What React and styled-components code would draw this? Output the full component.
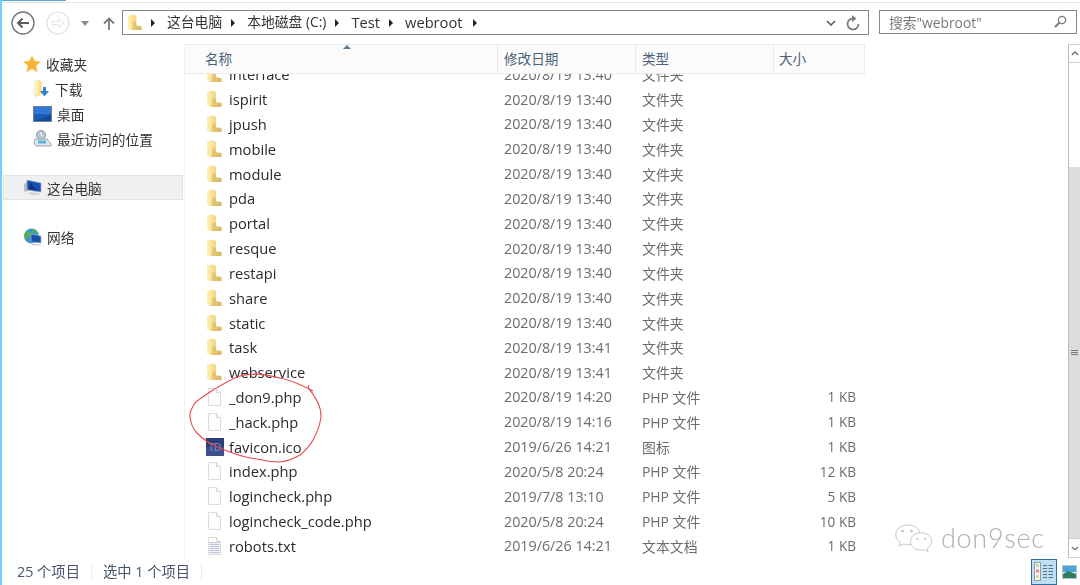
import React, { useId } from 'react';
import styled, { createGlobalStyle } from 'styled-components';

const FONT = `"Open Sans", "Noto Sans CJK SC", sans-serif`;

const Global = createGlobalStyle`
  html, body { margin: 0; padding: 0; height: 100%; background: #fff; overflow: hidden; }
  #root { height: 100%; }
  * { box-sizing: border-box; }
`;

const Window = styled.div`
  position: relative;
  height: 585px;
  width: 1080px;
  display: flex;
  flex-direction: column;
  border-left: 2px solid #6fd2f6;
  font-family: ${FONT};
  font-size: 14px;
  color: #2b2b2b;
  overflow: hidden;
  filter: blur(0.3px);
`;

const TitleEdge = styled.div`
  height: 3px;
  flex: none;
  border-bottom: 1px solid #e6e6e6;
  &::before {
    content: '';
    display: block;
    width: 64px;
    height: 1px;
    background: #4fa8e0;
  }
`;

const Toolbar = styled.div`
  height: 41px;
  flex: none;
  display: flex;
  align-items: flex-start;
  padding: 7px 3px 0 9px;
`;

const Nav = styled.div`
  width: 111px;
  height: 26px;
  flex: none;
  display: flex;
  align-items: center;
`;

const AddressBar = styled.div`
  width: 747px;
  height: 25px;
  flex: none;
  display: flex;
  align-items: center;
  border: 1px solid #8a8a8a;
  padding: 0 4px;
`;

const Crumbs = styled.div`
  flex: 1;
  display: flex;
  align-items: center;
  color: #333;
  font-size: 13.8px;
`;

const Crumb = styled.span`
  line-height: 20px;
  white-space: nowrap;
  font-size: ${p => (p.$latin ? 14.7 : 13.8)}px;
  position: relative;
  top: -1px;
`;

const CrumbArrow = styled.span`
  width: 0;
  height: 0;
  flex: none;
  margin: 0 ${p => p.$right}px 0 ${p => p.$left}px;
  border-left: 4px solid #222;
  border-top: 4px solid transparent;
  border-bottom: 4px solid transparent;
`;

const SearchBox = styled.div`
  width: 198px;
  height: 24px;
  flex: none;
  margin-left: 10px;
  display: flex;
  align-items: center;
  justify-content: space-between;
  border: 1px solid #8a8a8a;
  padding: 0 9px 1px;
  color: #777;
  font-size: 13.8px;
`;

const Main = styled.div`
  flex: 1;
  min-height: 0;
  display: flex;
`;

const Sidebar = styled.nav`
  width: 183px;
  flex: none;
  padding-top: 7px;
  border-right: 1px solid #f2f2f2;
`;

const NavRow = styled.div`
  height: 25px;
  display: flex;
  align-items: center;
  gap: 5px;
  padding-left: ${p => (p.$child ? 30 : 20)}px;
  margin: ${p => p.$top || 0}px 1px 0;
  color: #333;
  font-size: 13.7px;
  white-space: nowrap;
  background: ${p => (p.$active ? '#f0f0f0' : 'transparent')};
  outline: ${p => (p.$active ? '1px solid #e2e2e2' : 'none')};
  outline-offset: -1px;
`;

const ListArea = styled.section`
  width: 680px;
  flex: none;
  position: relative;
  display: flex;
  flex-direction: column;
  min-height: 0;
`;

const Header = styled.div`
  position: relative;
  height: 30px;
  flex: none;
  display: grid;
  grid-template-columns: 313px 138px 138px 91px;
  background: #fbfbfb;
  border: 1px solid #ececec;
  border-left: none;
  z-index: 1;
`;

const HeadCell = styled.div`
  display: flex;
  align-items: center;
  padding: 0 0 2px ${p => p.$pad}px;
  color: #4d6079;
  font-size: 13.6px;
  border-right: 1px solid #e8e8e8;
  &:last-child { border-right: none; }
`;

const SortCaret = styled.span`
  position: absolute;
  left: 158px;
  top: 0;
  width: 0;
  height: 0;
  border-left: 4px solid transparent;
  border-right: 4px solid transparent;
  border-bottom: 4px solid #5c7a99;
`;

const Rows = styled.div`
  flex: 1;
  min-height: 0;
  overflow: hidden;
`;

const RowsInner = styled.div`
  margin-top: -12.2px;
`;

const Row = styled.div`
  height: 24.83px;
  display: grid;
  grid-template-columns: 313px 138px 138px 82px;
  align-items: center;
`;

const NameCell = styled.div`
  display: flex;
  align-items: center;
  padding-left: 21px;
  gap: 7px;
  color: #2b2b2b;
  font-size: 14.7px;
  white-space: nowrap;
`;

const DateCell = styled.div`
  padding-left: 6px;
  color: #6c6c6c;
  font-size: 14.3px;
  white-space: nowrap;
`;

const TypeCell = styled.div`
  padding-left: 6px;
  color: #6c6c6c;
  font-size: 13.9px;
  white-space: nowrap;
`;

const SizeCell = styled.div`
  color: #6c6c6c;
  font-size: 13.6px;
  white-space: nowrap;
  text-align: right;
`;

const ScrollGutter = styled.div`
  flex: 1;
  display: flex;
  justify-content: flex-end;
`;

const Scrollbar = styled.div`
  width: 12px;
  display: flex;
  flex-direction: column;
  border-left: 1px solid #bdbdbd;
`;

const ScrollButton = styled.div`
  height: ${p => p.$h}px;
  flex: none;
  display: flex;
  align-items: center;
  justify-content: center;
  border-top: 1px solid #d0d0d0;
  border-bottom: 1px solid #d0d0d0;
`;

const ScrollTrack = styled.div`
  height: 104px;
  flex: none;
`;

const ScrollThumb = styled.div`
  flex: 1;
  background: #dcdcdc;
  display: flex;
  flex-direction: column;
  align-items: center;
  justify-content: center;
  gap: 1px;
`;

const Grip = styled.span`
  width: 7px;
  height: 1px;
  background: #777;
`;

const StatusBar = styled.footer`
  height: 27px;
  flex: none;
  display: flex;
  align-items: center;
  padding-left: 15px;
  color: #46556a;
  font-size: 14.3px;
`;

const StatusText = styled.span`
  white-space: nowrap;
  position: relative;
  top: -1px;
`;

const StatusDivider = styled.span`
  width: 1px;
  height: 18px;
  background: #ececec;
  margin: 0 11px;
`;

const ViewButtons = styled.div`
  margin-left: auto;
  display: flex;
  align-items: center;
  padding-right: 3px;
  gap: 5px;
`;

const ViewButton = styled.div`
  width: ${p => (p.$active ? 26 : 15)}px;
  height: ${p => (p.$active ? 26 : 14)}px;
  display: flex;
  align-items: center;
  justify-content: center;
  background: ${p => (p.$active ? '#bfe0f4' : 'transparent')};
  border: ${p => (p.$active ? '1px solid #2f6f9f' : 'none')};
`;

const Annotation = styled.svg`
  position: absolute;
  left: 0;
  top: 0;
  width: 1080px;
  height: 585px;
  pointer-events: none;
  z-index: 2;
`;

const Watermark = styled.div`
  position: absolute;
  left: 892px;
  top: 521px;
  display: flex;
  align-items: center;
  gap: 7px;
  z-index: 2;
`;

const WatermarkText = styled.span`
  font-family: Lato, "Open Sans", sans-serif;
  font-weight: 300;
  font-size: 27px;
  line-height: 34px;
  letter-spacing: 0.7px;
  color: #b0b0b0;
`;

const FolderIcon = ({ size = 16, h = 18 }) => {
  const id = useId();
  return (
    <svg width={size} height={h} viewBox="0 0 16 18">
      <defs>
        <linearGradient id={id} x1="0" x2="1" y1="0" y2="0">
          <stop offset="0" stopColor="#fdf1b8" />
          <stop offset="0.55" stopColor="#f6d97f" />
          <stop offset="1" stopColor="#e4c46c" />
        </linearGradient>
      </defs>
      <path d="M1 1.5 L7 0.5 L10 2 V12 L15.5 13 V17 H4 L1 15.5 Z" fill={`url(#${id})`} />
      <path d="M6.5 8 L10 9 L10 13 L15.5 13.5 V17 H5.5 Z" fill="#c9a95a" opacity="0.45" />
    </svg>
  );
};

const FileIcon = ({ lines }) => (
  <svg width="16" height="18" viewBox="0 0 16 18">
    <path d="M2.5 0.5 H10.5 L14.5 4.5 V17.5 H2.5 Z" fill="#fdfdfd" stroke="#dcdcdc" />
    <path d="M10.5 0.5 V4.5 H14.5" fill="#f3f3f3" stroke="#d6d6d6" />
    {lines &&
      [5, 7, 9, 11, 13, 15].map(y => (
        <rect key={y} x="3.5" y={y} width="10" height="1.2" fill="#b9c8dc" />
      ))}
  </svg>
);

const FaviconIcon = () => (
  <svg width="18" height="18" viewBox="0 0 18 18" style={{ marginLeft: 0, marginRight: -2 }}>
    <rect width="18" height="18" fill="#2c3d78" />
    <rect y="9" width="18" height="9" fill="#3e4f8d" />
    <text x="2" y="13" fontFamily="Liberation Sans, sans-serif" fontSize="10" fill="#7d8bbd">TD</text>
  </svg>
);

const StarIcon = () => (
  <svg width="18" height="18" viewBox="0 0 18 18">
    <path d="M9 0.5 L11.5 6 L17.5 6.8 L13 10.8 L14.3 17 L9 13.8 L3.7 17 L5 10.8 L0.5 6.8 L6.5 6 Z" fill="#f9b233" stroke="#f3d27a" strokeWidth="0.6" />
  </svg>
);

const DownloadIcon = () => (
  <svg width="17" height="18" viewBox="0 0 17 18">
    <path d="M1 1 L6 0 L9 2 V14 L3 17 L1 15 Z" fill="#f8e08f" />
    <path d="M1 1 L5 0.5 V15 L1 15 Z" fill="#fcefb8" />
    <path d="M10 7 H13 V11 H16 L11.5 16.5 L7 11 H10 Z" fill="#2f86d0" />
  </svg>
);

const DesktopIcon = () => (
  <svg width="19" height="16" viewBox="0 0 19 16">
    <rect x="0.5" y="0.5" width="18" height="15" fill="#1e5cb8" stroke="#6f7f93" />
    <rect x="1" y="1" width="17" height="7" fill="#2f78d8" />
    <path d="M1 15 L18 9 V15 Z" fill="#164a9c" />
  </svg>
);

const RecentIcon = () => (
  <svg width="19" height="18" viewBox="0 0 19 18">
    <circle cx="8" cy="5" r="4.5" fill="#b9c5d0" stroke="#8c98a3" />
    <path d="M8 2 V5 L10 6" stroke="#fff" fill="none" />
    <path d="M2 9 H14 L18 14 V16 H3 L1 13 Z" fill="#dfe5ea" stroke="#9aa5af" />
    <rect x="5" y="10.5" width="8" height="3" fill="#5fb3d9" />
  </svg>
);

const ComputerIcon = () => (
  <svg width="19" height="17" viewBox="0 0 19 17">
    <path d="M1 5 L4 3 V13 L1 12 Z" fill="#b7bdc4" />
    <path d="M4 1 L18 4 V13 L4 11 Z" fill="#1b4fae" stroke="#9fb0c6" strokeWidth="0.7" />
    <path d="M8 3 L10 8 L15 11 L6 10 Z" fill="#0f2f76" />
    <path d="M6 13 L15 14 L17 16 H7 Z" fill="#d0d4d9" />
  </svg>
);

const NetworkIcon = () => (
  <svg width="19" height="18" viewBox="0 0 19 18">
    <circle cx="8.5" cy="8" r="7.5" fill="#3b96c9" />
    <path d="M3 3 C6 4 8 3 8 6 C8 9 4 9 3 12 C1 9 1 6 3 3 Z" fill="#5aae4c" />
    <path d="M9 1 C12 1 14 3 15 5 L11 5 Z" fill="#5aae4c" />
    <path d="M8 6 L18 8 V15 L8 14 Z" fill="#1b4fae" stroke="#a9bad0" strokeWidth="0.7" />
    <path d="M9 16 L17 16 L18 17.5 H8 Z" fill="#cfd3d8" />
  </svg>
);

const BackIcon = () => (
  <svg width="24" height="24" viewBox="0 0 24 24">
    <circle cx="12" cy="12" r="11" fill="#fff" stroke="#767676" strokeWidth="1.4" />
    <path d="M18 12 H7 M11.5 7.5 L7 12 L11.5 16.5" fill="none" stroke="#5c5c5c" strokeWidth="2" />
  </svg>
);

const ForwardIcon = () => (
  <svg width="24" height="24" viewBox="0 0 24 24" style={{ marginLeft: 11 }}>
    <circle cx="12" cy="12" r="11" fill="#fff" stroke="#e2e2e2" strokeWidth="1.2" />
    <path d="M6 10.5 H13 V7.5 L18 12 L13 16.5 V13.5 H6 Z" fill="none" stroke="#e2e2e2" strokeWidth="1" />
  </svg>
);

const DropCaret = () => (
  <svg width="8" height="5" viewBox="0 0 8 5" style={{ marginLeft: 11 }}>
    <path d="M0 0 H8 L4 5 Z" fill="#8a8a8a" />
  </svg>
);

const UpArrow = () => (
  <svg width="12" height="13" viewBox="0 0 12 13" style={{ marginLeft: 14 }}>
    <path d="M6 13 V2 M1 6.5 L6 1.5 L11 6.5" fill="none" stroke="#7a7a7a" strokeWidth="1.8" />
  </svg>
);

const Chevron = ({ up, color = '#555', w = 10 }) => (
  <svg width={w} height={w * 0.6} viewBox="0 0 10 6">
    <path d={up ? 'M1 5 L5 1 L9 5' : 'M1 1 L5 5 L9 1'} fill="none" stroke={color} strokeWidth="1.5" />
  </svg>
);

const RefreshIcon = () => (
  <svg width="14" height="16" viewBox="0 0 14 16" style={{ margin: '0 4px 0 10px' }}>
    <path d="M6.5 3.5 A5.5 5.5 0 1 0 12.5 9" fill="none" stroke="#7f7f7f" strokeWidth="1.8" />
    <path d="M6 0 L10.5 3.5 L6 7 Z" fill="#7f7f7f" />
  </svg>
);

const SearchIcon = () => (
  <svg width="13" height="13" viewBox="0 0 13 13">
    <circle cx="8" cy="5" r="3.6" fill="none" stroke="#7a7a7a" strokeWidth="1.4" />
    <path d="M5.3 7.7 L1 12" stroke="#7a7a7a" strokeWidth="2" />
  </svg>
);

const DetailsViewIcon = () => (
  <svg width="20" height="19" viewBox="0 0 20 19">
    <rect x="0.5" y="0.5" width="6" height="18" fill="#f4f4f4" stroke="#9a9a9a" />
    <rect x="2" y="2" width="3" height="3" fill="#c5d4a5" />
    <rect x="2" y="7.5" width="3" height="3" fill="#e28a8a" />
    <rect x="2" y="13" width="3" height="3" fill="#e8d68a" />
    {[3, 6, 9, 12, 15].map(y => (
      <path key={y} d={`M9 ${y}.5 H13 M14.5 ${y}.5 H19`} stroke="#51708c" />
    ))}
  </svg>
);

const ThumbViewIcon = () => (
  <svg width="15" height="14" viewBox="0 0 15 14">
    <rect x="0.5" y="0.5" width="14" height="13" fill="#e8f3fa" stroke="#b8c4cf" />
    <rect x="1" y="1" width="13" height="6" fill="#4ea3d8" />
    <path d="M1 9 L6 6 L14 9 V13 H1 Z" fill="#2f7d5a" />
  </svg>
);

const WeChatMark = () => (
  <svg width="40" height="32" viewBox="0 0 46 36">
    <g fill="#fff" stroke="#c4c4c4" strokeWidth="1.1">
      <path d="M16 3 C8 3 2 8 2 14 C2 18 4 21 7 23 L6 27 L11 25 C13 25.6 14.5 25.8 16 25.8 C24 25.8 30 20.5 30 14 C30 8 24 3 16 3 Z" />
      <path d="M31 12 C24 12 19 16.5 19 22 C19 27.5 24 32 31 32 C32.5 32 34 31.8 35 31.4 L39 34 L38.4 30 C41.5 28 43.5 25.2 43.5 22 C43.5 16.5 38 12 31 12 Z" />
    </g>
    <circle cx="10" cy="10" r="1.6" fill="#c4c4c4" />
    <circle cx="20" cy="10" r="1.6" fill="#c4c4c4" />
    <circle cx="27" cy="19" r="1.3" fill="#c4c4c4" />
    <circle cx="36" cy="19" r="1.3" fill="#c4c4c4" />
  </svg>
);

const DATE_A = '2020/8/19 13:40';
const DATE_B = '2020/8/19 13:41';
const FOLDER = '文件夹';
const PHP = 'PHP 文件';

const files = [
  { name: 'interface', date: DATE_A, type: FOLDER, kind: 'folder' },
  { name: 'ispirit', date: DATE_A, type: FOLDER, kind: 'folder' },
  { name: 'jpush', date: DATE_A, type: FOLDER, kind: 'folder' },
  { name: 'mobile', date: DATE_A, type: FOLDER, kind: 'folder' },
  { name: 'module', date: DATE_A, type: FOLDER, kind: 'folder' },
  { name: 'pda', date: DATE_A, type: FOLDER, kind: 'folder' },
  { name: 'portal', date: DATE_A, type: FOLDER, kind: 'folder' },
  { name: 'resque', date: DATE_A, type: FOLDER, kind: 'folder' },
  { name: 'restapi', date: DATE_A, type: FOLDER, kind: 'folder' },
  { name: 'share', date: DATE_A, type: FOLDER, kind: 'folder' },
  { name: 'static', date: DATE_A, type: FOLDER, kind: 'folder' },
  { name: 'task', date: DATE_B, type: FOLDER, kind: 'folder' },
  { name: 'webservice', date: DATE_B, type: FOLDER, kind: 'folder' },
  { name: '_don9.php', date: '2020/8/19 14:20', type: PHP, size: '1 KB', kind: 'file' },
  { name: '_hack.php', date: '2020/8/19 14:16', type: PHP, size: '1 KB', kind: 'file' },
  { name: 'favicon.ico', date: '2019/6/26 14:21', type: '图标', size: '1 KB', kind: 'ico' },
  { name: 'index.php', date: '2020/5/8 20:24', type: PHP, size: '12 KB', kind: 'file' },
  { name: 'logincheck.php', date: '2019/7/8 13:10', type: PHP, size: '5 KB', kind: 'file' },
  { name: 'logincheck_code.php', date: '2020/5/8 20:24', type: PHP, size: '10 KB', kind: 'file' },
  { name: 'robots.txt', date: '2019/6/26 14:21', type: '文本文档', size: '1 KB', kind: 'txt' },
];

const iconFor = kind => {
  if (kind === 'folder') return <FolderIcon />;
  if (kind === 'ico') return <FaviconIcon />;
  return <FileIcon lines={kind === 'txt'} />;
};

const crumbs = [
  { label: '这台电脑' },
  { label: '本地磁盘 (C:)' },
  { label: 'Test', latin: true },
  { label: 'webroot', latin: true },
];

export default function App() {
  return (
    <Window>
      <Global />
      <TitleEdge />
      <Toolbar>
        <Nav>
          <BackIcon />
          <ForwardIcon />
          <DropCaret />
          <UpArrow />
        </Nav>
        <AddressBar>
          <Crumbs>
            <FolderIcon size={15} h={17} />
            {crumbs.map(c => (
              <React.Fragment key={c.label}>
                <CrumbArrow $left={9} $right={12} />
                <Crumb $latin={c.latin}>{c.label}</Crumb>
              </React.Fragment>
            ))}
            <CrumbArrow $left={10} $right={0} />
          </Crumbs>
          <Chevron />
          <RefreshIcon />
        </AddressBar>
        <SearchBox>
          <span>搜索"webroot"</span>
          <SearchIcon />
        </SearchBox>
      </Toolbar>
      <Main>
        <Sidebar>
          <NavRow><StarIcon />收藏夹</NavRow>
          <NavRow $child><DownloadIcon />下载</NavRow>
          <NavRow $child><DesktopIcon />桌面</NavRow>
          <NavRow $child><RecentIcon />最近访问的位置</NavRow>
          <NavRow $top={24} $active><ComputerIcon />这台电脑</NavRow>
          <NavRow $top={24}><NetworkIcon />网络</NavRow>
        </Sidebar>
        <ListArea>
          <Header>
            <SortCaret />
            <HeadCell $pad={20}>名称</HeadCell>
            <HeadCell $pad={6}>修改日期</HeadCell>
            <HeadCell $pad={6}>类型</HeadCell>
            <HeadCell $pad={5}>大小</HeadCell>
          </Header>
          <Rows>
            <RowsInner>
              {files.map(f => (
                <Row key={f.name}>
                  <NameCell>{iconFor(f.kind)}{f.name}</NameCell>
                  <DateCell>{f.date}</DateCell>
                  <TypeCell>{f.type}</TypeCell>
                  <SizeCell>{f.size}</SizeCell>
                </Row>
              ))}
            </RowsInner>
          </Rows>
        </ListArea>
        <ScrollGutter>
          <Scrollbar>
            <ScrollButton $h={19}><Chevron up w={8} color="#666" /></ScrollButton>
            <ScrollTrack />
            <ScrollThumb><Grip /><Grip /><Grip /></ScrollThumb>
            <ScrollButton $h={20}><Chevron w={8} color="#666" /></ScrollButton>
          </Scrollbar>
        </ScrollGutter>
      </Main>
      <StatusBar>
        <StatusText>25 个项目</StatusText>
        <StatusDivider />
        <StatusText>选中 1 个项目</StatusText>
        <StatusDivider />
        <ViewButtons>
          <ViewButton $active><DetailsViewIcon /></ViewButton>
          <ViewButton><ThumbViewIcon /></ViewButton>
        </ViewButtons>
      </StatusBar>
      <Annotation viewBox="2 0 1080 585">
        <path
          d="M313 391 C300 384 290 380 280 378 C265 374 250 372 237 377 C228 381 220 386 213 390 C204 396 199 399 195 403 C191 409 189 413 190 417 C191 425 193 429 197 433 C202 438 206 441 210 443 C217 447 224 450 230 452 C240 456 248 458 257 459 C265 461 272 462 280 462 C288 461 295 458 300 455 C306 450 310 446 313 440 C318 431 320 425 321 417 C321 411 320 407 318 403 C315 397 312 392 308 388 L309 385"
          fill="none"
          stroke="#e8474c"
          strokeWidth="1.1"
        />
      </Annotation>
      <Watermark>
        <WeChatMark />
        <WatermarkText>don9sec</WatermarkText>
      </Watermark>
    </Window>
  );
}
